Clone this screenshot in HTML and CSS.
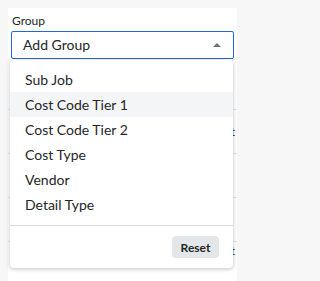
FILE: index.html
```html
<!DOCTYPE html>
<html>
<head>
<meta charset="utf-8">
<link rel="stylesheet" href="styles.css">
</head>
<body>
<div class="panel">
  <div class="label">Group</div>
  <div class="select">
    <span class="value">Add Group</span>
    <span class="caret"></span>
  </div>
  <div class="rows">
    <div class="row"></div>
    <div class="row"><span class="cell">Cost</span></div>
    <div class="row"></div>
    <div class="row"></div>
    <div class="row row-last"><span class="cell">Cost</span></div>
  </div>
  <div class="menu">
    <ul class="list">
      <li class="item">Sub Job</li>
      <li class="item item-hover">Cost Code Tier 1</li>
      <li class="item">Cost Code Tier 2</li>
      <li class="item">Cost Type</li>
      <li class="item">Vendor</li>
      <li class="item">Detail Type</li>
    </ul>
    <div class="footer">
      <button class="reset">Reset</button>
    </div>
  </div>
</div>
</body>
</html>
```

FILE: styles.css
```css
html, body {
  margin: 0;
  padding: 0;
}
body {
  background: #f7f7f8;
  font-family: Lato, "Liberation Sans", sans-serif;
  color: #232628;
  width: 244px;
  height: 281px;
  overflow: hidden;
}
.panel {
  position: relative;
  margin: 8px 0 0 8px;
  width: 223px;
  height: 273px;
  padding: 5px 3px 0 3px;
  background: #fff;
  box-sizing: content-box;
}
.label {
  font-size: 12px;
  line-height: 16px;
  padding-left: 1px;
  margin-bottom: 2px;
}
.select {
  height: 26px;
  border: 1px solid #2066df;
  border-radius: 2px;
  display: flex;
  align-items: center;
  justify-content: space-between;
  padding: 0 12px 0 11px;
}
.value {
  font-size: 14px;
  line-height: 18px;
}
.caret {
  width: 0;
  height: 0;
  border-left: 4px solid transparent;
  border-right: 4px solid transparent;
  border-bottom: 4px solid #6a767c;
  margin-bottom: 1px;
}
.rows {
  margin: 7px -3px 0 -3px;
}
.row {
  height: 43px;
  border-bottom: 1px solid #e4e6e8;
  display: flex;
  align-items: center;
  justify-content: flex-end;
  padding-right: 2px;
}
.row-last {
  align-items: flex-start;
  padding-top: 1px;
}
.cell {
  font-size: 12px;
  color: #232628;
}
.menu {
  position: absolute;
  left: 2px;
  top: 52px;
  width: 223px;
  background: #fff;
  border-radius: 4px;
  box-shadow: 0 1px 4px rgba(0, 0, 0, 0.25);
}
.list {
  list-style: none;
  margin: 0;
  padding: 7px 0 8px 0;
}
.item {
  height: 25px;
  line-height: 25px;
  font-size: 14px;
  padding-left: 15px;
}
.item-hover {
  background: #f4f5f6;
}
.footer {
  border-top: 1px solid #d6dadc;
  display: flex;
  justify-content: flex-end;
  padding: 10px 14px 10px 0;
}
.reset {
  font-family: Lato, "Liberation Sans", sans-serif;
  font-weight: 700;
  font-size: 12px;
  color: #232628;
  background: #e4e7ea;
  border: none;
  border-radius: 4px;
  height: 22px;
  width: 47px;
  padding: 0;
}
```
